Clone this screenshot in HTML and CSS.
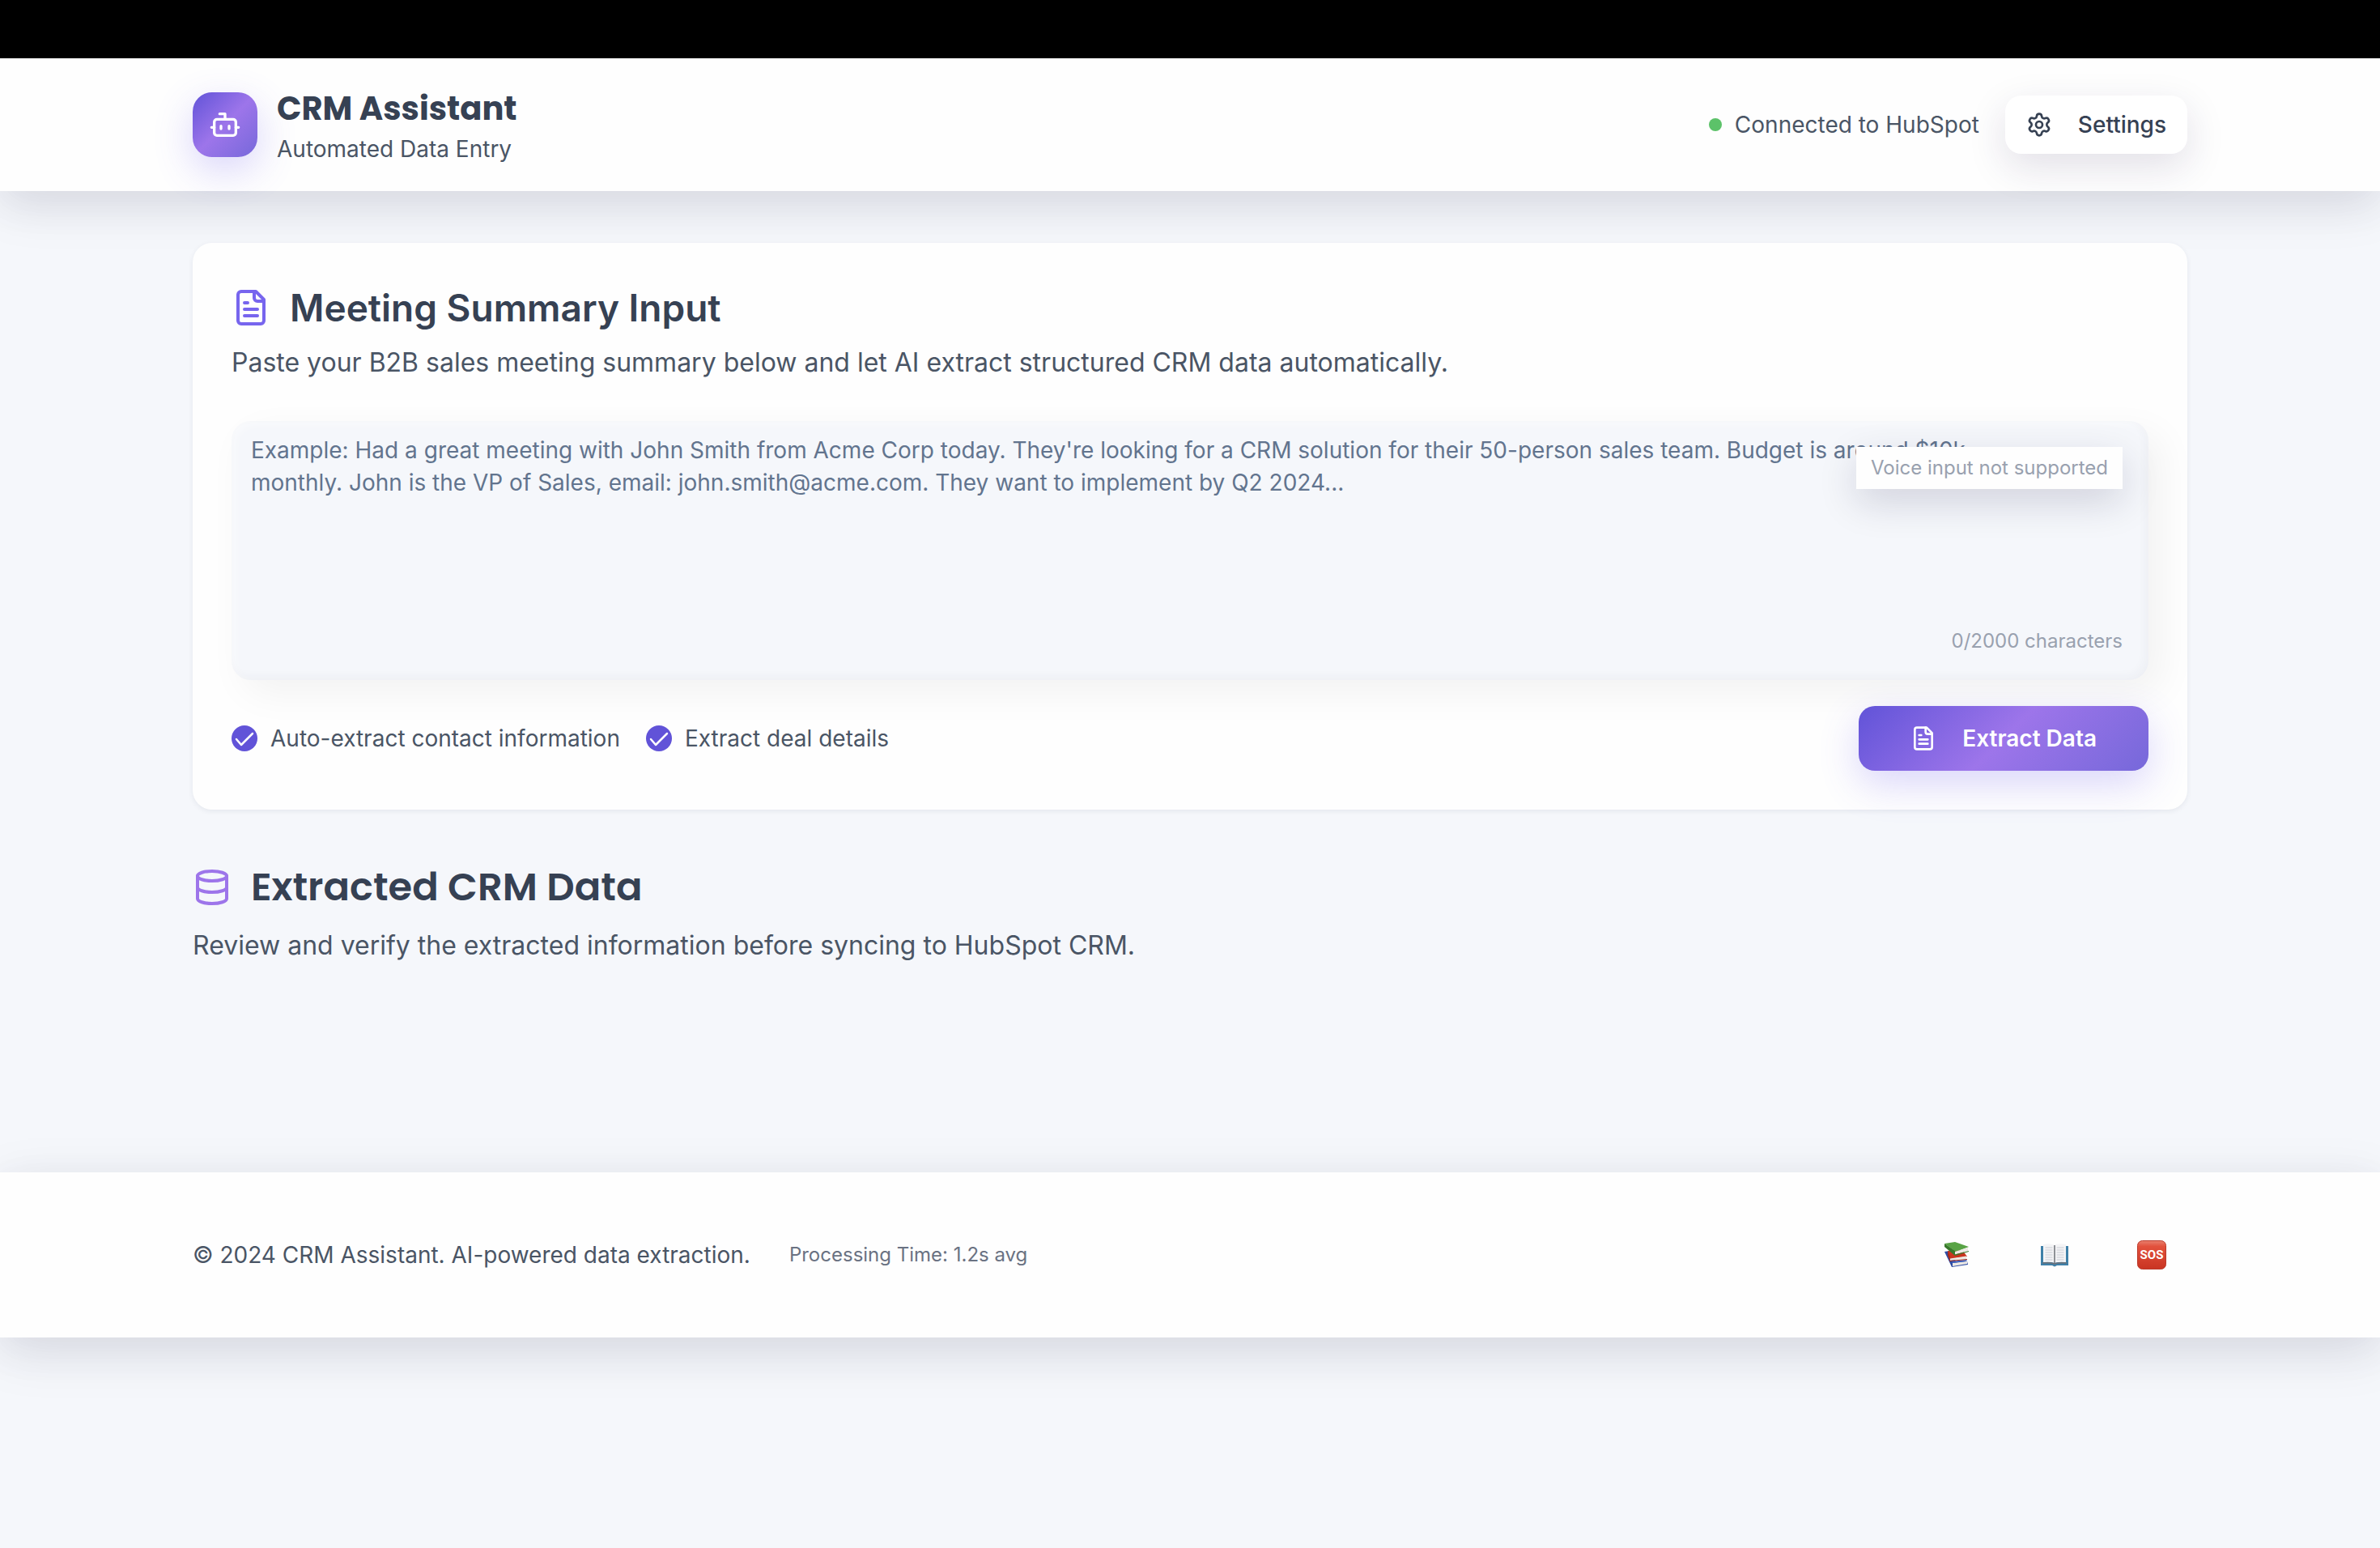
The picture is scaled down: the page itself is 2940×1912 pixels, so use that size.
FILE: index.html
```html
<!DOCTYPE html>
<html lang="en">
<head>
<meta charset="utf-8">
<meta name="viewport" content="width=device-width, initial-scale=1">
<title>CRM Assistant</title>
<link rel="stylesheet" href="styles.css">
</head>
<body>
<div class="window-bar"></div>
<header class="header">
  <div class="container header-row">
    <div class="brand">
      <div class="brand-mark">
        <svg class="icon icon-md" viewBox="0 0 24 24" aria-hidden="true"><path d="M12 8V4H8"/><rect width="16" height="12" x="4" y="8" rx="2"/><path d="M2 14h2M20 14h2M15 13v2M9 13v2"/></svg>
      </div>
      <div>
        <h1 class="brand-title">CRM Assistant</h1>
        <p class="brand-subtitle">Automated Data Entry</p>
      </div>
    </div>
    <div class="header-actions">
      <div class="status"><span class="status-dot"></span>Connected to HubSpot</div>
      <button class="button button-plain" type="button">
        <svg class="icon icon-sm" viewBox="0 0 24 24" aria-hidden="true"><path d="M9.671 4.136a2.340 2.340 0 0 1 4.659 0 2.340 2.340 0 0 0 3.319 1.915 2.340 2.340 0 0 1 2.330 4.033 2.340 2.340 0 0 0 0 3.831 2.340 2.340 0 0 1-2.330 4.033 2.340 2.340 0 0 0-3.319 1.915 2.340 2.340 0 0 1-4.659 0 2.340 2.340 0 0 0-3.320-1.915 2.340 2.340 0 0 1-2.330-4.033 2.340 2.340 0 0 0 0-3.831A2.340 2.340 0 0 1 6.350 6.051a2.340 2.340 0 0 0 3.319-1.915"/><circle cx="12" cy="12" r="3"/></svg>
        Settings
      </button>
    </div>
  </div>
</header>
<main class="container main">
  <section class="card">
    <div class="heading-row">
      <svg class="icon icon-lg icon-indigo" viewBox="0 0 24 24" aria-hidden="true"><path d="M15 2H6a2 2 0 0 0-2 2v16a2 2 0 0 0 2 2h12a2 2 0 0 0 2-2V7Z"/><path d="M14 2v4a2 2 0 0 0 2 2h4M10 9H8M16 13H8M16 17H8"/></svg>
      <h2 class="heading">Meeting Summary Input</h2>
    </div>
    <p class="lead">Paste your B2B sales meeting summary below and let AI extract structured CRM data automatically.</p>
    <div class="editor">
      <textarea class="editor-input" aria-label="Meeting summary" maxlength="2000" placeholder="Example: Had a great meeting with John Smith from Acme Corp today. They're looking for a CRM solution for their 50-person sales team. Budget is around $10k monthly. John is the VP of Sales, email: john.smith@acme.com. They want to implement by Q2 2024..."></textarea>
      <div class="voice-note">Voice input not supported</div>
      <div class="counter">0/2000 characters</div>
    </div>
    <div class="card-actions">
      <div class="options">
        <label class="option"><input class="check" type="checkbox" checked>Auto-extract contact information</label>
        <label class="option"><input class="check" type="checkbox" checked>Extract deal details</label>
      </div>
      <button class="button button-primary" type="button">
        <svg class="icon icon-sm" viewBox="0 0 24 24" aria-hidden="true"><path d="M15 2H6a2 2 0 0 0-2 2v16a2 2 0 0 0 2 2h12a2 2 0 0 0 2-2V7Z"/><path d="M14 2v4a2 2 0 0 0 2 2h4M10 9H8M16 13H8M16 17H8"/></svg>
        Extract Data
      </button>
    </div>
  </section>
  <section class="results">
    <div class="heading-row">
      <svg class="icon icon-lg icon-violet" viewBox="0 0 24 24" aria-hidden="true"><ellipse cx="12" cy="5" rx="9" ry="3"/><path d="M3 5v14a9 3 0 0 0 18 0V5M3 12a9 3 0 0 0 18 0"/></svg>
      <h2 class="heading heading-brand">Extracted CRM Data</h2>
    </div>
    <p class="lead">Review and verify the extracted information before syncing to HubSpot CRM.</p>
  </section>
</main>
<footer class="footer">
  <div class="container footer-row">
    <div class="footer-text">
      <p class="copyright">© 2024 CRM Assistant. AI-powered data extraction.</p>
      <p class="processing">Processing Time: 1.2s avg</p>
    </div>
    <nav class="footer-links" aria-label="Help">
      <a class="footer-link" href="#docs" aria-label="Documentation">
        <svg class="emoji" viewBox="0 0 36 36" aria-hidden="true">
          <path fill="#2f4da3" d="M2 14l6-1 8 13 14 0 1 4-20 3z"/>
          <path fill="#ece9e4" d="M12 28l18-2v3l-18 3z"/>
          <path fill="#3e62c0" d="M11 26l18-2 1 1.500-18 2.500z"/>
          <path fill="#c9341f" d="M6 13l18-1 6 8-22 3z"/>
          <path fill="#ece9e4" d="M9 22.500l20-3v3.500l-20 2z"/>
          <path fill="#a52a1b" d="M6 13l3 8v5L6 19zM8 25l22-2v1l-22 2z"/>
          <path fill="#58a345" d="M2 4l13-2 17 6-16 6z"/>
          <path fill="#ece9e4" d="M15 14l16-5v4l-16 4.500z"/>
          <path fill="#37782b" d="M2 4l13 9v6L2 8zM15 17.500l17-4.500v1l-17 5z"/>
        </svg>
      </a>
      <a class="footer-link" href="#guide" aria-label="Guide">
        <svg class="emoji" viewBox="0 0 36 36" aria-hidden="true">
          <path fill="#3f80a8" d="M1 7h34v24H21l-3 1.500-3-1.500H1z"/>
          <path fill="#f4f4f6" d="M4 5q9-2 14 1 5-3 14-1v22q-9-1-14 1-5-2-14-1z"/>
          <path fill="none" stroke="#c9ccd4" d="M6.500 9h9M6.500 12h9M6.500 15h9M6.500 18h9M6.500 21h9M6.500 24h9M20.500 9h9M20.500 12h9M20.500 15h9M20.500 18h9M20.500 21h9M20.500 24h9"/>
          <path fill="none" stroke="#6c7078" stroke-width="1.500" d="M18 6v23M3 28q9-1 15 1 6-2 15-1"/>
        </svg>
      </a>
      <a class="footer-link" href="#support" aria-label="Support">
        <svg class="emoji" viewBox="0 0 36 36" aria-hidden="true">
          <defs><linearGradient id="sos" x1="0" y1="0" x2="0" y2="1"><stop offset="0" stop-color="#e8806e"/><stop offset=".2" stop-color="#e2513c"/><stop offset="1" stop-color="#c93422"/></linearGradient></defs>
          <rect width="35" height="35" x=".5" y=".5" rx="6" fill="url(#sos)" stroke="#bb3a2b"/>
          <text class="sos-text" x="18" y="23" text-anchor="middle">SOS</text>
        </svg>
      </a>
    </nav>
  </div>
</footer>
</body>
</html>
```
FILE: styles.css
```css
* { box-sizing: border-box; margin: 0; }

body {
  min-height: 100vh;
  background: #f5f7fb;
  color: #364153;
  font-family: Inter, "Liberation Sans", sans-serif;
  font-size: 28px;
  line-height: 40px;
}

.container { max-width: 2560px; margin: 0 auto; padding: 0 48px; }
.window-bar { position: relative; z-index: 1; height: 72px; background: #000; }

.header, .footer {
  background: #fefefe;
  box-shadow: 0 16px 64px rgba(0, 0, 0, .1), 0 16px 48px rgba(80, 80, 170, .06);
}
.header { padding: 32px 0; }
.header-row, .brand, .header-actions, .status, .heading-row, .card-actions,
.options, .option, .footer-row, .footer-text, .footer-links { display: flex; align-items: center; }
.header-row, .card-actions, .footer-row { justify-content: space-between; }

.brand { gap: 24px; }
.brand-mark {
  display: grid;
  place-items: center;
  width: 80px;
  height: 80px;
  border-radius: 24px;
  color: #fff;
}
.brand-mark, .button-primary {
  background: linear-gradient(135deg, #6153d8 0%, #9d75ea 50%, #7668da 100%);
  box-shadow: 0 16px 48px rgba(99, 85, 240, .24);
}
.brand-title { font-family: Poppins, Inter, sans-serif; font-size: 40px; font-weight: 700; line-height: 60px; }
.brand-subtitle { color: #4a5565; }

.icon { flex: none; fill: none; stroke: currentColor; stroke-width: 2; stroke-linecap: round; stroke-linejoin: round; }
.icon-sm { width: 32px; height: 32px; }
.icon-md { width: 40px; height: 40px; }
.icon-lg { width: 48px; height: 48px; }
.icon-indigo { color: #7765ee; }
.icon-violet { color: #9d75ea; }

.header-actions { gap: 32px; }
.status { gap: 16px; color: #4a5565; }
.status-dot { width: 16px; height: 16px; border-radius: 50%; background: #5cc269; }

.button {
  display: flex;
  align-items: center;
  gap: 32px;
  border: 0;
  border-radius: 20px;
  font: inherit;
}
.button-plain {
  padding: 16px 26px;
  background: #fff;
  color: #364153;
  font-weight: 500;
  box-shadow: 0 16px 48px rgba(40, 20, 80, .13);
}
.button-primary { padding: 20px 64px; color: #fff; font-weight: 600; }

.main { padding-top: 64px; padding-bottom: 256px; }
.card {
  padding: 48px;
  border-radius: 24px;
  background: #fefefe;
  box-shadow: 0 2px 6px rgba(40, 50, 80, .08);
}
.heading-row { gap: 24px; }
.heading { font-size: 46px; font-weight: 600; line-height: 64px; }
.heading-brand { font-family: Poppins, Inter, sans-serif; font-size: 48px; }
.lead { padding-top: 12px; color: #4a5565; font-size: 32px; line-height: 48px; }

.editor { position: relative; margin-top: 48px; }
.editor-input {
  display: block;
  width: 100%;
  height: 320px;
  padding: 16px 128px 16px 24px;
  border: 0;
  border-radius: 24px;
  background: #f5f7fb;
  box-shadow: 16px 16px 48px rgba(0, 0, 0, .05), inset -4px -4px 12px rgba(40, 50, 80, .04), inset 4px 4px 12px rgba(255, 255, 255, .5);
  color: inherit;
  font: inherit;
  resize: none;
}
.editor-input::placeholder { color: #62748e; opacity: 1; }
.voice-note, .counter { position: absolute; right: 32px; color: #99a1af; font-size: 24px; line-height: 32px; }
.voice-note {
  top: 32px;
  padding: 10px 18px;
  background: #fefefe;
  box-shadow: 0 16px 48px rgba(20, 20, 60, .16);
}
.counter { bottom: 32px; }

.card-actions { position: relative; margin-top: 32px; }
.options { gap: 32px; }
.option { gap: 16px; color: #4a5565; }
.check {
  width: 32px;
  height: 32px;
  margin: 0;
  border-radius: 50%;
  appearance: none;
  background: #6153d8 url("data:image/svg+xml,%3Csvg xmlns='http://www.w3.org/2000/svg' viewBox='0 0 32 32'%3E%3Cpath d='M6 17l6 7L26 10' fill='none' stroke='white' stroke-width='2.500' stroke-linecap='round' stroke-linejoin='round'/%3E%3C/svg%3E") center / contain;
}

.results { margin-top: 64px; }
.results .lead { padding-top: 16px; }

.footer { padding: 64px 0; }
.footer-row { min-height: 76px; }
.footer-text { gap: 48px; }
.copyright { color: #4a5565; }
.processing { color: #6a7282; font-size: 24px; }
.footer-links { gap: 32px; }
.footer-link { display: flex; padding: 0 26px; }
.emoji { width: 36px; height: 36px; }
.sos-text { fill: #fff; font-family: Roboto, sans-serif; font-size: 15px; font-weight: 700; }
```
